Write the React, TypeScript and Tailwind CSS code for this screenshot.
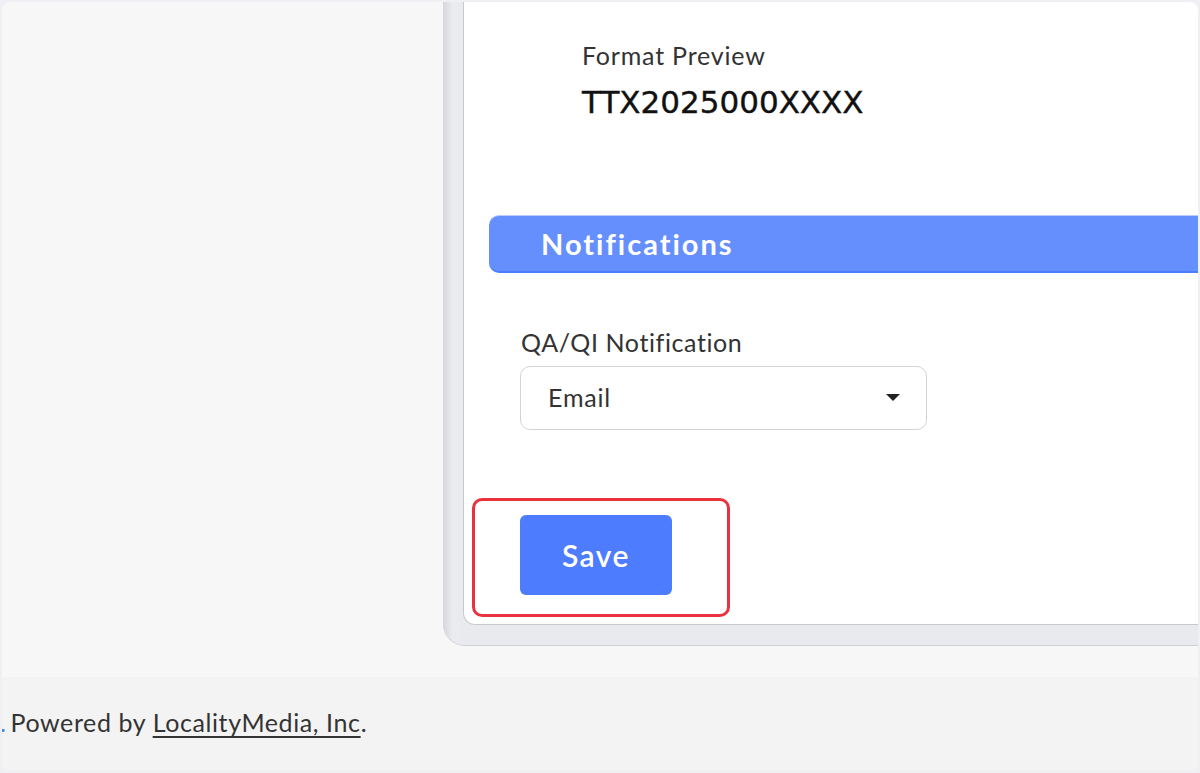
import React from "react";

export default function App() {
  return (
    <div className="w-[1200px] h-[773px] bg-[#f0f0f4] p-[2px]" style={{ fontFamily: "Lato, 'Noto Sans', sans-serif" }}>
      <div className="w-full h-full rounded-[8px] overflow-hidden bg-[#f7f7f7] flex flex-col">
        <div className="h-[675px] flex shrink-0">
          <div className="w-[441px] shrink-0" />
          <div className="flex-1 h-[644px] rounded-bl-[22px] bg-linear-to-r from-[#d6d7dc] via-[#ebecef] to-[#e9eaee] bg-no-repeat border-b border-[#d0d0d3] pl-5 pb-5 flex" style={{ backgroundSize: "20px 100%", backgroundColor: "#e9eaee" }}>
            <div className="flex-1 h-full bg-white rounded-bl-[12px] border-l border-b border-[#c9c9cc] flex flex-col">
              <div className="ml-[118px] mt-[38px] text-[25px] leading-[30px] tracking-[0.8px] text-[#333]">Format Preview</div>
              <div className="ml-[118px] mt-[14px] text-[31px] leading-[36px] text-[#111]" style={{ fontFamily: "'DejaVu Sans', sans-serif", WebkitTextStroke: "0.4px #111" }}>
                TTX2025000XXXX
              </div>
              <div className="ml-[25px] mt-[95px] h-[58px] rounded-l-[10px] bg-[#668ffe] border-t border-[#b9cbff] border-b-2 border-b-[#4c7bfd] flex items-center pl-[52px]">
                <span className="text-white text-[29px] font-bold tracking-[2px]">Notifications</span>
              </div>
              <div className="ml-[57px] mt-[54px] text-[25px] leading-[30px] tracking-[0.6px] text-[#333]">QA/QI Notification</div>
              <div className="ml-[56px] mt-[9px] w-[407px] h-[64px] rounded-[10px] border border-[#d4d4d6] bg-white flex items-center justify-between pl-[27px] pr-[26px]">
                <span className="text-[25px] tracking-[0.8px] text-[#333]">Email</span>
                <svg width="14" height="8" viewBox="0 0 14 8">
                  <path d="M0 0 L14 0 L7 7 Z" fill="#222" />
                </svg>
              </div>
              <div className="ml-[8px] mt-[68px] w-[258px] h-[119px] rounded-[10px] border-[3px] border-[#e8333f] pl-[45px] pt-[14px]">
                <button className="w-[152px] h-[80px] rounded-[6px] bg-[#4d7cfe] text-white text-[30px] font-semibold tracking-[1.5px]">Save</button>
              </div>
            </div>
          </div>
        </div>
        <div className="flex-1 bg-[#f3f3f3] flex items-center pb-[2px]">
          <div className="flex items-baseline text-[25px] tracking-[0.6px] text-[#333] ml-[-2px]">
            <span className="text-[#4a8ad8]">.</span>
            <span className="ml-[4px]">
              Powered by <span className="underline underline-offset-[4px] decoration-[1.5px]">LocalityMedia, Inc</span>.
            </span>
          </div>
        </div>
      </div>
    </div>
  );
}
